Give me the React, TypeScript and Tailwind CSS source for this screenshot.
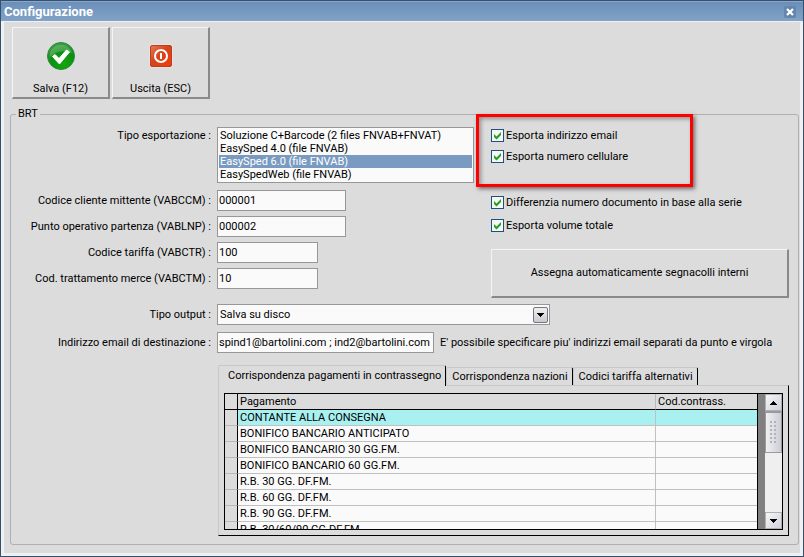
import { useState } from "react";
import type { ReactNode } from "react";

const exportTypes = [
  "Soluzione C+Barcode (2 files FNVAB+FNVAT)",
  "EasySped 4.0 (file FNVAB)",
  "EasySped 6.0 (file FNVAB)",
  "EasySpedWeb (file FNVAB)",
];

const tabs = [
  "Corrispondenza pagamenti in contrassegno",
  "Corrispondenza nazioni",
  "Codici tariffa alternativi",
];

const payments = [
  "CONTANTE ALLA CONSEGNA",
  "BONIFICO BANCARIO ANTICIPATO",
  "BONIFICO BANCARIO 30 GG.FM.",
  "BONIFICO BANCARIO 60 GG.FM.",
  "R.B. 30 GG. DF.FM.",
  "R.B. 60 GG. DF.FM.",
  "R.B. 90 GG. DF.FM.",
  "R.B. 30/60/90 GG.DF.FM.",
];

const bevel = "border border-t-[#f4f4f4] border-l-[#f4f4f4] border-r-[#8a8a8a] border-b-[#8a8a8a] bg-[#dcdcdc]";

function SaveIcon() {
  return (
    <svg width="28" height="28" viewBox="0 0 28 28" aria-hidden="true">
      <defs>
        <radialGradient id="saveGrad" cx="0.6" cy="0.8" r="0.8">
          <stop offset="0%" stopColor="#12a80c" />
          <stop offset="60%" stopColor="#0b8f12" />
          <stop offset="100%" stopColor="#3f9d4a" />
        </radialGradient>
      </defs>
      <circle cx="14" cy="14" r="13.5" fill="url(#saveGrad)" stroke="#2c8a38" strokeWidth="1" />
      <path d="M3 11a11.5 11.5 0 0 1 22 0C18 8 9 9 3 15z" fill="#fff" opacity="0.2" />
      <path d="M5.5 14.5l2.500-2 4 4 7.500-8.500 3 2-10 12z" fill="#fff" stroke="#fff" strokeWidth="1" strokeLinejoin="round" />
    </svg>
  );
}

function ExitIcon() {
  return (
    <svg width="24" height="24" viewBox="0 0 24 24" aria-hidden="true">
      <defs>
        <linearGradient id="exitGrad" x1="0" y1="0" x2="1" y2="1">
          <stop offset="0%" stopColor="#e07a5c" />
          <stop offset="45%" stopColor="#d8431c" />
          <stop offset="100%" stopColor="#ee3f08" />
        </linearGradient>
      </defs>
      <rect x="0.5" y="0.5" width="23" height="23" rx="2" fill="#f6e8e4" />
      <rect x="1.5" y="1.5" width="21" height="21" rx="1.5" fill="url(#exitGrad)" stroke="#b8401f" strokeWidth="1" />
      <circle cx="12" cy="12" r="6" fill="none" stroke="#fff" strokeWidth="2" />
      <path d="M12 9v6" stroke="#fff" strokeWidth="2" />
    </svg>
  );
}

function Arrow({ up = false }: { up?: boolean }) {
  return (
    <svg width="7" height="4" viewBox="0 0 7 4" shapeRendering="crispEdges" aria-hidden="true">
      <path d={up ? "M0 4h7L3.500 0z" : "M0 0h7L3.500 4z"} fill="#000" />
    </svg>
  );
}

function ToolButton({ icon, label }: { icon: ReactNode; label: string }) {
  return (
    <button type="button" className={`${bevel} flex h-[72px] w-[98px] flex-col items-center border-r-2 border-b-2 pt-3`}>
      <span className="flex h-8 items-center">{icon}</span>
      <span className="mt-[10px]">{label}</span>
    </button>
  );
}

function CheckBox({ label }: { label: string }) {
  return (
    <label className="flex h-[13px] items-center gap-[2px]">
      <span className="grid">
        <input
          type="checkbox"
          defaultChecked
          className="peer col-start-1 row-start-1 size-[13px] appearance-none border border-[#1c5180] bg-[#f6f6f4]"
        />
        <svg
          className="pointer-events-none invisible col-start-1 row-start-1 size-[13px] peer-checked:visible"
          viewBox="0 0 13 13"
          aria-hidden="true"
        >
          <path d="M3 5v3l2.500 2.500L10 6V3L5.500 7.500z" fill="#21a121" />
        </svg>
      </span>
      {label}
    </label>
  );
}

function Field({ id, label, children }: { id: string; label: string; children: ReactNode }) {
  return (
    <div className="flex items-center gap-[6px]">
      <label htmlFor={id} className="w-[200px] shrink-0 text-right">
        {label} :
      </label>
      {children}
    </div>
  );
}

function TextBox({ id, value, width }: { id: string; value: string; width: string }) {
  return (
    <input
      id={id}
      type="text"
      defaultValue={value}
      className={`h-[21px] border border-[#979797] bg-[#fafafa] px-px ${width}`}
    />
  );
}

function PaymentsGrid() {
  const [selected, setSelected] = useState(0);

  return (
    <div className="flex h-[137px] overflow-hidden border border-black bg-[#808080]">
      <div className="min-w-0 flex-1 overflow-hidden border-r border-black bg-[#fafafa]">
        <table className="w-full table-fixed border-separate border-spacing-0">
          <colgroup>
            <col className="w-[13px]" />
            <col />
            <col className="w-[101px]" />
          </colgroup>
          <thead>
            <tr className="h-4 bg-[#dcdcdc] text-left leading-[14px]">
              <th className="border-r border-b border-black p-0" />
              <th className="border-r border-b border-r-[#b8b8b8] border-b-black p-0 pl-[2px] font-normal">Pagamento</th>
              <th className="border-b border-black p-0 pl-[2px] font-normal">Cod.contrass.</th>
            </tr>
          </thead>
          <tbody>
            {payments.map((name, i) => (
              <tr
                key={name}
                onClick={() => setSelected(i)}
                className={`h-4 leading-[14px] ${i === selected ? "bg-[#a9f0f0]" : "bg-[#fafafa]"}`}
              >
                <td className="border-r border-b border-r-black border-b-[#b8b8c0] bg-[#dcdcdc] p-0" />
                <td className="border-r border-b border-[#c0c0c0] p-0 pl-[2px]">{name}</td>
                <td className="border-b border-[#c0c0c0] p-0" />
              </tr>
            ))}
          </tbody>
        </table>
      </div>
      {/* Scrollbar */}
      <div className="ml-[7px] flex w-[17px] flex-col bg-[#efefef]">
        <button type="button" aria-label="Su" className="flex h-[17px] items-center justify-center border border-[#b0b0b4] bg-linear-to-br from-[#f6f6f6] to-[#d0d2da]">
          <Arrow up />
        </button>
        <div className="flex h-[42px] items-center justify-center border border-t-2 border-[#9a9a9e] bg-linear-to-r from-[#f0f0f2] to-[#cdced6]">
          <svg width="7" height="23" viewBox="0 0 7 23" aria-hidden="true">
            {[0, 4, 8, 12, 16, 20].map((y) => (
              <g key={y} fill="#b4b4b8">
                <rect x="0" y={y} width="2" height="2" />
                <rect x="4" y={y} width="2" height="2" />
              </g>
            ))}
          </svg>
        </div>
        <button type="button" aria-label="Giù" className="mt-auto flex h-[17px] items-center justify-center border border-[#b0b0b4] bg-linear-to-br from-[#f6f6f6] to-[#d0d2da]">
          <Arrow />
        </button>
      </div>
    </div>
  );
}

export default function App() {
  const [tab, setTab] = useState(0);

  return (
    <div className="flex min-h-screen flex-col border border-[#34506f] bg-[#dcdcdc] font-[Roboto,sans-serif] text-[11px] leading-[14px] text-black">
      <header className="flex h-5 items-center justify-between border-t border-[#8ba6c6] bg-linear-to-b from-[#6a8fb9] to-[#82a3c8] pr-[7px] pl-[3px]">
        <h1 className="pt-px text-[13px] font-bold text-white">Configurazione</h1>
        <button type="button" aria-label="Chiudi" className="flex size-3 items-center justify-center rounded-xs bg-[#6486ac]">
          <svg width="8" height="8" viewBox="0 0 8 8" aria-hidden="true">
            <path d="M1 1l6 6M7 1l-6 6" stroke="#fff" strokeWidth="2.200" />
          </svg>
        </button>
      </header>

      <main className="flex-1 border-x-[3px] border-t border-b-[3px] border-[#f0f0f0] pt-[5px] pr-px pb-2 pl-[6px]">
        <div className="flex gap-[2px] pl-[2px]">
          <ToolButton icon={<SaveIcon />} label="Salva (F12)" />
          <ToolButton icon={<ExitIcon />} label="Uscita (ESC)" />
        </div>

        <fieldset className="mt-2 min-w-0 rounded-[3px] border border-[#b0b0b0] pr-[9px] pb-2">
          <legend className="ml-[5px] px-[2px]">BRT</legend>

          <div className="flex gap-[2px]">
            {/* Export type and codes */}
            <div className="flex flex-col gap-[5px] pt-[6px]">
              <div className="mb-[2px] flex gap-[6px]">
                <label htmlFor="tipo" className="w-[200px] shrink-0 pt-[2px] text-right">
                  Tipo esportazione :
                </label>
                <select
                  id="tipo"
                  size={4}
                  defaultValue={exportTypes[2]}
                  className="h-14 w-[257px] overflow-hidden border border-[#979797] bg-[#fafafa] p-px"
                >
                  {exportTypes.map((t) => (
                    <option key={t} value={t} className="h-[13px] min-h-0 px-px py-0 leading-[13px] checked:bg-[#7a9bc1] checked:text-white">
                      {t}
                    </option>
                  ))}
                </select>
              </div>
              <Field id="vabccm" label="Codice cliente mittente (VABCCM)">
                <TextBox id="vabccm" value="000001" width="w-[129px]" />
              </Field>
              <Field id="vablnp" label="Punto operativo partenza (VABLNP)">
                <TextBox id="vablnp" value="000002" width="w-[129px]" />
              </Field>
              <Field id="vabctr" label="Codice tariffa (VABCTR)">
                <TextBox id="vabctr" value="100" width="w-[101px]" />
              </Field>
              <Field id="vabctm" label="Cod. trattamento merce (VABCTM)">
                <TextBox id="vabctm" value="10" width="w-[101px]" />
              </Field>
            </div>

            {/* Options */}
            <div className="-mt-[7px] min-w-0 flex-1">
              <div className="flex w-[217px] flex-col gap-2 border-3 border-[#fe0000] px-3 pt-3 pb-[21px] shadow-[2px_2px_4px_rgba(0,0,0,0.5),inset_2px_2px_4px_rgba(0,0,0,0.35)]">
                <CheckBox label="Esporta indirizzo email" />
                <CheckBox label="Esporta numero cellulare" />
              </div>
              <div className="mt-[9px] flex flex-col gap-[10px] pl-[15px]">
                <CheckBox label="Differenzia numero documento in base alla serie" />
                <CheckBox label="Esporta volume totale" />
                <button type="button" className={`${bevel} mt-[7px] h-[49px] w-full border-r-2 border-b-2`}>
                  Assegna automaticamente segnacolli interni
                </button>
              </div>
            </div>
          </div>

          <div className="mt-[6px] flex flex-col gap-[7px]">
            <Field id="output" label="Tipo output">
              <div className="grid w-[333px]">
                <select id="output" className="col-start-1 row-start-1 h-[21px] appearance-none border border-[#979797] bg-[#fafafa] px-[2px]">
                  <option>Salva su disco</option>
                </select>
                <span className="pointer-events-none col-start-1 row-start-1 mr-[2px] flex h-4 w-[15px] items-center justify-center self-center justify-self-end rounded-xs border border-[#77777b] bg-linear-to-b from-[#f0f0f0] to-[#c8cad2]">
                  <Arrow />
                </span>
              </div>
            </Field>
            <Field id="email" label="Indirizzo email di destinazione">
              <TextBox id="email" value="spind1@bartolini.com ; ind2@bartolini.com" width="w-[217px]" />
              <span>E' possibile specificare piu' indirizzi email separati da punto e virgola</span>
            </Field>
          </div>

          {/* Tabs */}
          <div className="mt-3 ml-[207px]">
            <div className="flex items-end">
              {tabs.map((t, i) => (
                <button
                  key={t}
                  type="button"
                  onClick={() => setTab(i)}
                  className={`rounded-t-[2px] border-t border-r border-l border-t-[#c8c8c8] border-r-black border-l-[#c8c8c8] ${
                    i === tab ? "relative -mb-px h-[21px] bg-[#dcdcdc] pr-1 pl-[9px]" : "h-[18px] pr-1 pl-[5px]"
                  }`}
                >
                  {t}
                </button>
              ))}
            </div>
            <div className="border border-t-[#c8c8c8] border-r-black border-b-black border-l-[#c8c8c8] px-[5px] pt-[7px] pb-[5px]">
              <PaymentsGrid />
            </div>
          </div>
        </fieldset>
      </main>
    </div>
  );
}
